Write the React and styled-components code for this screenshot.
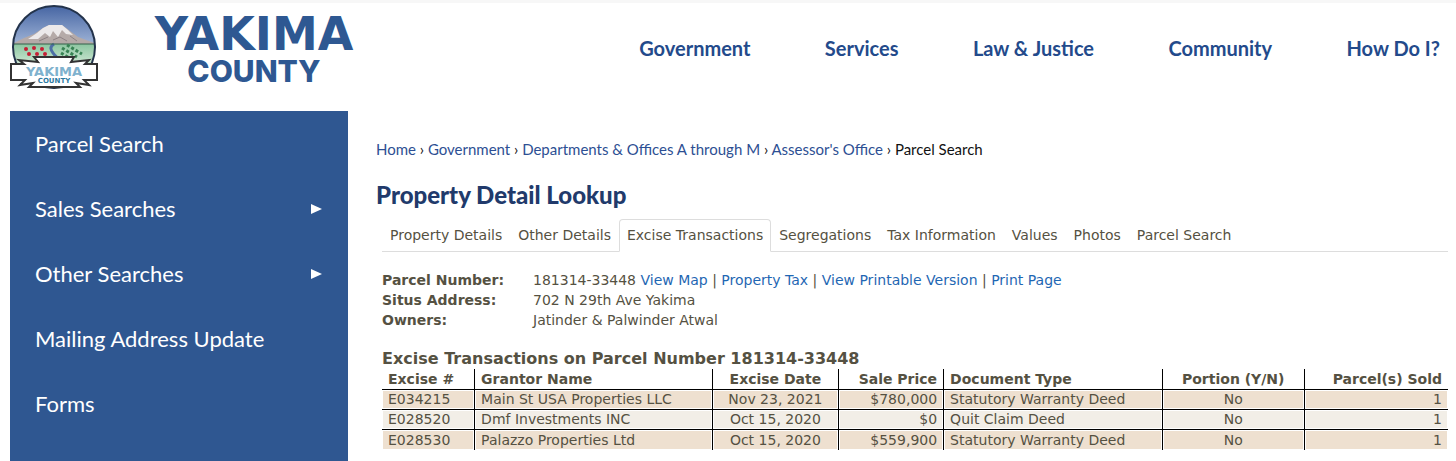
import React from "react";
import styled, { createGlobalStyle } from "styled-components";

const GlobalStyle = createGlobalStyle`
  * {
    box-sizing: border-box;
  }

  body {
    margin: 0;
    background: #fff;
    font-family: "DejaVu Sans", Verdana, sans-serif;
    font-size: 14px;
    color: #555142;
  }

  a {
    text-decoration: none;
  }
`;

const Page = styled.div`
  min-height: 100vh;
  display: flex;
  flex-direction: column;
  border-top: 3px solid #f7f7f7;
`;

const Header = styled.header`
  height: 108px;
  padding: 0 16px 0 10px;
  display: flex;
  justify-content: space-between;
  align-items: flex-start;
`;

const Brand = styled.a`
  display: flex;
  gap: 12px;
`;

const Wordmark = styled.span`
  width: 284px;
  padding-top: 8px;
  display: flex;
  flex-direction: column;
  align-items: center;
  color: #2e5892;
  font-weight: 900;
`;

const Yakima = styled.span`
  font-family: "DejaVu Sans", sans-serif;
  font-size: 46px;
  line-height: 46px;
`;

const County = styled.span`
  font-family: Inter, sans-serif;
  font-weight: 800;
  font-size: 30px;
  line-height: 28px;
`;

const MainNav = styled.nav`
  width: 56%;
  padding-top: 32px;
  display: flex;
  justify-content: space-between;

  a {
    font-family: Lato, sans-serif;
    font-weight: 700;
    font-size: 20px;
    line-height: 26px;
    color: #234a8b;
  }
`;

const Body = styled.div`
  flex: 1;
  display: flex;
  gap: 28px;
  padding: 0 8px 0 10px;
`;

const SideNav = styled.nav`
  flex: 0 0 338px;
  background: #2f5791;
`;

const SideLink = styled.a`
  height: 65px;
  padding: 0 26px 0 25px;
  display: flex;
  justify-content: space-between;
  align-items: center;
  font-family: Lato, sans-serif;
  font-size: 22px;
  color: #fff;
`;

const Main = styled.main`
  flex: 1;
  padding-top: 27px;
`;

const Breadcrumb = styled.nav`
  font-family: Lato, sans-serif;
  font-size: 15px;
  line-height: 22px;
  color: #111;

  a {
    color: #2d4f93;
  }
`;

const Title = styled.h1`
  margin: 20px 0 9px;
  font-family: Lato, sans-serif;
  font-weight: 900;
  font-size: 24px;
  line-height: 30px;
  color: #213a6b;
`;

const Tabs = styled.div`
  margin-left: 6px;
  display: flex;
  border-bottom: 1px solid #ddd;
`;

const Tab = styled.button`
  height: 33px;
  margin-bottom: -1px;
  padding: 0 7px 2px;
  background: ${({ $active }) => ($active ? "#fff" : "transparent")};
  border: 1px solid ${({ $active }) => ($active ? "#ddd" : "transparent")};
  border-bottom-color: ${({ $active }) => ($active ? "#fff" : "transparent")};
  border-radius: 4px 4px 0 0;
  font: inherit;
  color: inherit;
  white-space: nowrap;
`;

const Panel = styled.section`
  margin: 18px 0 0 6px;
`;

const Facts = styled.dl`
  margin: 0;
  display: grid;
  grid-template-columns: 151px 1fr;
  line-height: 20px;

  dt {
    font-weight: 700;
  }

  dd {
    margin: 0;
  }

  a {
    color: #1f67b3;
  }
`;

const Excise = styled.table`
  width: 100%;
  margin-top: 19px;
  border-spacing: 0;
  table-layout: fixed;

  caption {
    text-align: left;
    font-weight: 700;
    font-size: 16px;
    line-height: 20px;
  }
`;

const Col = styled.col`
  width: ${({ $width }) => $width};
`;

const Row = styled.tr`
  background: ${({ $odd }) => ($odd ? "#eee0d0" : "#f2eee7")};
`;

const cell = ({ $align }) => `
  padding: 0 6px;
  text-align: ${$align};
  line-height: 19px;
  white-space: nowrap;
`;

const HeadCell = styled.th`
  ${cell}
  padding-top: 1px;
  border-bottom: 1px solid #000;

  & + & {
    border-left: 1px solid #000;
  }
`;

const Cell = styled.td`
  ${cell}
  height: 20px;
  box-shadow: inset 0 0 0 1px #fff;

  & + & {
    border-left: 1px solid #000;
  }

  tr:not(:last-child) > & {
    border-bottom: 1px solid #000;
  }
`;

const columns = [
  { label: "Excise #", align: "left", width: "92px" },
  { label: "Grantor Name", align: "left", width: "22.3%" },
  { label: "Excise Date", align: "center", width: "126px" },
  { label: "Sale Price", align: "right", width: "105px" },
  { label: "Document Type", align: "left", width: "20.5%" },
  { label: "Portion (Y/N)", align: "center", width: "142px" },
  { label: "Parcel(s) Sold", align: "right", width: "144px" },
];

const sales = [
  ["E034215", "Main St USA Properties LLC", "Nov 23, 2021", "$780,000", "Statutory Warranty Deed", "No", "1"],
  ["E028520", "Dmf Investments INC", "Oct 15, 2020", "$0", "Quit Claim Deed", "No", "1"],
  ["E028530", "Palazzo Properties Ltd", "Oct 15, 2020", "$559,900", "Statutory Warranty Deed", "No", "1"],
];

const mainLinks = ["Government", "Services", "Law & Justice", "Community", "How Do I?"];

const sideLinks = [
  { label: "Parcel Search" },
  { label: "Sales Searches", more: true },
  { label: "Other Searches", more: true },
  { label: "Mailing Address Update" },
  { label: "Forms" },
];

const crumbs = ["Home", "Government", "Departments & Offices A through M", "Assessor's Office"];

const tabs = [
  "Property Details",
  "Other Details",
  "Excise Transactions",
  "Segregations",
  "Tax Information",
  "Values",
  "Photos",
  "Parcel Search",
];

const Arrow = () => (
  <svg width="11" height="10" viewBox="0 0 11 10" aria-hidden="true">
    <path d="M0 0L11 5L0 10Z" fill="#fff" />
  </svg>
);

const Seal = () => (
  <svg width="90" height="88" viewBox="0 0 90 88" aria-hidden="true">
    <defs>
      <clipPath id="disc">
        <circle cx="44" cy="44" r="41" />
      </clipPath>
      <linearGradient id="sky" x1="0" y1="0" x2="0" y2="1">
        <stop offset="0" stopColor="#3f5f9f" />
        <stop offset="0.5" stopColor="#a5b9da" />
      </linearGradient>
      <linearGradient id="field" x1="0" y1="0" x2="0" y2="1">
        <stop offset="0" stopColor="#8cc6a0" />
        <stop offset="0.5" stopColor="#d7ecdb" />
      </linearGradient>
    </defs>
    <g clipPath="url(#disc)">
      <path d="M0 0H90V88H0Z" fill="url(#sky)" />
      <path d="M2 41L14 35L24 31L33 25L39 22L52 22L60 28L68 34L87 41Z" fill="#b5aaa8" />
      <path d="M18 36L27 30L33 25L39 22L52 22L58 27L63 32L56 31L52 27L48 34L43 28L40 34L35 30L28 36Z" fill="#ece9ea" />
      <path d="M43 37L50 34L57 38M29 38L38 34M60 33L67 38" fill="none" stroke="#8c8184" strokeWidth="1" />
      <path d="M0 41H90V88H0Z" fill="url(#field)" />
      <path d="M44 41C39 44 41 47 43 50C45 53 47 54 50 58" fill="none" stroke="#4d6fa5" strokeWidth="3" />
      <path d="M0 41H90" stroke="#35604a" strokeWidth="1" />
      <g fill="#c51e34">
        <circle cx="16" cy="46" r="2" />
        <circle cx="24" cy="45" r="2" />
        <circle cx="32" cy="46" r="2" />
        <circle cx="19" cy="51" r="2" />
        <circle cx="27" cy="51" r="2" />
        <circle cx="35" cy="51" r="2" />
      </g>
      <path d="M52 45L67 54M57 42L72 51M51 50L61 56" stroke="#388354" strokeWidth="3" strokeDasharray="3 2" />
    </g>
    <circle cx="44" cy="44" r="41" fill="none" stroke="#23334b" strokeWidth="2" />
    <path
      d="M1 61H14L9 57L28 59L24 54H64L61 59L79 57L75 61H87V77H74L79 82L66 80L70 84H19L23 80L10 82L15 77H1Z"
      fill="#fff"
      stroke="#333"
      strokeWidth="2"
    />
    <text x="44" y="73" textAnchor="middle" fontFamily="DejaVu Sans, sans-serif" fontWeight="700" fontSize="13" fill="#7fb2ce">
      YAKIMA
    </text>
    <text x="44" y="80" textAnchor="middle" fontFamily="DejaVu Sans, sans-serif" fontWeight="700" fontSize="7" fill="#2e7ba3">
      COUNTY
    </text>
  </svg>
);

const App = () => {
  return (
    <>
      <GlobalStyle />
      <Page>
        <Header>
          <Brand href="#">
            <Seal />
            <Wordmark>
              <Yakima>YAKIMA</Yakima>
              <County>COUNTY</County>
            </Wordmark>
          </Brand>
          <MainNav>
            {mainLinks.map((label) => (
              <a href="#" key={label}>{label}</a>
            ))}
          </MainNav>
        </Header>
        <Body>
          <SideNav>
            {sideLinks.map(({ label, more }) => (
              <SideLink href="#" key={label}>
                {label}
                {more && <Arrow />}
              </SideLink>
            ))}
          </SideNav>
          <Main>
            <Breadcrumb>
              {crumbs.map((label) => (
                <React.Fragment key={label}>
                  <a href="#">{label}</a> ›{" "}
                </React.Fragment>
              ))}
              Parcel Search
            </Breadcrumb>
            <Title>Property Detail Lookup</Title>
            <Tabs role="tablist">
              {tabs.map((label) => {
                const active = label === "Excise Transactions";
                return (
                  <Tab key={label} role="tab" aria-selected={active} $active={active}>
                    {label}
                  </Tab>
                );
              })}
            </Tabs>
            <Panel>
              <Facts>
                <dt>Parcel Number:</dt>
                <dd>
                  181314-33448 <a href="#">View Map</a> | <a href="#">Property Tax</a> |{" "}
                  <a href="#">View Printable Version</a> | <a href="#">Print Page</a>
                </dd>
                <dt>Situs Address:</dt>
                <dd>702 N 29th Ave Yakima</dd>
                <dt>Owners:</dt>
                <dd>Jatinder &amp; Palwinder Atwal</dd>
              </Facts>
              <Excise>
                <caption>Excise Transactions on Parcel Number 181314-33448</caption>
                <colgroup>
                  {columns.map(({ label, width }) => (
                    <Col key={label} $width={width} />
                  ))}
                </colgroup>
                <thead>
                  <tr>
                    {columns.map(({ label, align }) => (
                      <HeadCell key={label} $align={align}>{label}</HeadCell>
                    ))}
                  </tr>
                </thead>
                <tbody>
                  {sales.map((sale, i) => (
                    <Row key={sale[0]} $odd={i % 2 === 0}>
                      {sale.map((value, j) => (
                        <Cell key={columns[j].label} $align={columns[j].align}>{value}</Cell>
                      ))}
                    </Row>
                  ))}
                </tbody>
              </Excise>
            </Panel>
          </Main>
        </Body>
      </Page>
    </>
  );
};

export default App;
